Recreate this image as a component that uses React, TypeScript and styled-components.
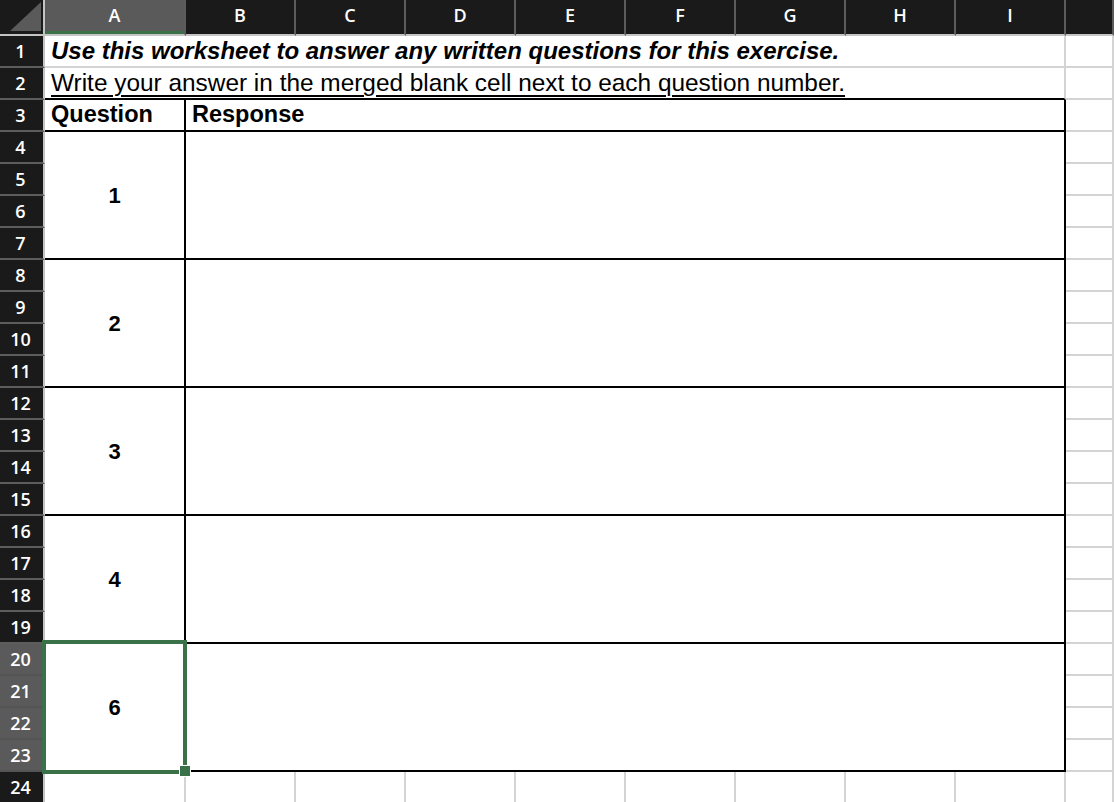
import React from "react";
import styled, { createGlobalStyle, css } from "styled-components";

const GlobalStyle = createGlobalStyle`
  html, body {
    margin: 0;
    padding: 0;
    background: #ffffff;
    overflow: hidden;
  }
`;

const Sheet = styled.div`
  display: grid;
  grid-template-columns: 45px 141px repeat(8, 110px) 1fr;
  grid-template-rows: 36px repeat(24, 32px);
  width: 1114px;
  height: 802px;
  overflow: hidden;
  font-family: "Liberation Sans", Arial, sans-serif;
  color: #000;
`;

const Corner = styled.div`
  position: relative;
  grid-column: 1;
  grid-row: 1;
  background: #1a1a1a;
  border-right: 2px solid #c4c4c4;
  border-bottom: 2px solid #c4c4c4;

  &::after {
    content: "";
    position: absolute;
    right: 2px;
    bottom: 3px;
    width: 31px;
    height: 29px;
    background: #5a5a5a;
    clip-path: polygon(100% 0, 100% 100%, 0 100%);
  }
`;

const headerText = css`
  font-family: "Open Sans", "DejaVu Sans", sans-serif;
  font-size: 18px;
  font-weight: 600;
  color: #ffffff;
  display: flex;
  align-items: center;
  justify-content: center;
  box-sizing: border-box;
`;

const ColHeader = styled.div<{ $col: number; $active?: boolean }>`
  ${headerText};
  grid-column: ${({ $col }) => $col};
  grid-row: 1;
  background: ${({ $active }) => ($active ? "#5a5a5a" : "#1a1a1a")};
  border-right: 2px solid #5c5c5c;
  border-bottom: 2px solid #c4c4c4;
  padding-bottom: 4px;
  ${({ $active }) =>
    $active &&
    css`
      box-shadow: inset 0 -3px 0 #3b7149;
    `}
`;

const RowHeader = styled.div<{ $row: number; $active?: boolean }>`
  ${headerText};
  grid-column: 1;
  grid-row: ${({ $row }) => $row + 1};
  background: ${({ $active }) => ($active ? "#5a5a5a" : "#1a1a1a")};
  border-bottom: 2px solid ${({ $active }) => ($active ? "#545454" : "#5c5c5c")};
  border-right: 2px solid #c4c4c4;
  padding-right: 2px;
`;

const Cell = styled.div<{
  $col: string;
  $row: string;
  $boxed?: boolean;
  $underTable?: boolean;
  $center?: boolean;
}>`
  grid-column: ${({ $col }) => $col};
  grid-row: ${({ $row }) => $row};
  box-sizing: border-box;
  background: #ffffff;
  border-right: 2px solid ${({ $boxed }) => ($boxed ? "#000" : "#d4d4d4")};
  border-bottom: 2px solid
    ${({ $boxed, $underTable }) => ($boxed || $underTable ? "#000" : "#d4d4d4")};
  display: flex;
  align-items: ${({ $center }) => ($center ? "center" : "flex-end")};
  justify-content: ${({ $center }) => ($center ? "center" : "flex-start")};
  padding: ${({ $center }) => ($center ? "0" : "0 0 2px 6px")};
  font-size: 24px;
  line-height: 27px;
  white-space: nowrap;
  overflow: visible;
`;

const Title = styled.span`
  font-weight: 700;
  font-style: italic;
`;

const Note = styled.span`
  font-size: 24.4px;
  text-decoration: underline;
  text-decoration-thickness: 2px;
  text-underline-offset: 4px;
`;

const Heading = styled.span`
  font-weight: 700;
  font-size: 23.5px;
`;

const Number = styled.span`
  font-weight: 700;
  font-size: 22px;
`;

/* active cell outline with its fill handle */
const Selection = styled.div<{ $row: number }>`
  position: relative;
  grid-column: 2;
  grid-row: ${({ $row }) => `${$row + 1} / span 4`};
  margin: -4px -1px -2px -3px;
  border: 4px solid #3b7149;
  z-index: 2;
  pointer-events: none;

  &::after {
    content: "";
    position: absolute;
    right: -7px;
    bottom: -6px;
    width: 10px;
    height: 10px;
    background: #3b7149;
    box-shadow: 0 0 0 1px #ffffff;
  }
`;

const COLS = ["A", "B", "C", "D", "E", "F", "G", "H", "I"];
const QUESTIONS = [
  { row: 4, label: "1" },
  { row: 8, label: "2" },
  { row: 12, label: "3" },
  { row: 16, label: "4" },
  { row: 20, label: "6" },
];
const ACTIVE_ROWS = [20, 21, 22, 23];

const gridRow = (r: number, span = 1) => `${r + 1} / span ${span}`;

const App: React.FC = () => {
  const spare: React.ReactNode[] = [];
  for (let r = 1; r <= 23; r++) {
    spare.push(<Cell key={`j${r}`} $col="11" $row={gridRow(r)} />);
  }

  return (
    <React.Fragment>
      <GlobalStyle />
      <Sheet>
        <Corner />
        {COLS.map((c, i) => (
          <ColHeader key={c} $col={i + 2} $active={c === "A"}>
            {c}
          </ColHeader>
        ))}
        <ColHeader $col={11} />

        {Array.from({ length: 24 }, (_, i) => i + 1).map((r) => (
          <RowHeader key={r} $row={r} $active={ACTIVE_ROWS.includes(r)}>
            {r}
          </RowHeader>
        ))}

        {/* Instructions */}
        <Cell $col="2 / 11" $row={gridRow(1)}>
          <Title>
            Use this worksheet to answer any written questions for this exercise.
          </Title>
        </Cell>
        <Cell $col="2 / 11" $row={gridRow(2)} $underTable>
          <Note>
            Write your answer in the merged blank cell next to each question number.
          </Note>
        </Cell>

        {/* Answer table */}
        <Cell $col="2" $row={gridRow(3)} $boxed>
          <Heading>Question</Heading>
        </Cell>
        <Cell $col="3 / 11" $row={gridRow(3)} $boxed>
          <Heading>Response</Heading>
        </Cell>
        {QUESTIONS.map((q) => (
          <React.Fragment key={q.row}>
            <Cell $col="2" $row={gridRow(q.row, 4)} $boxed $center>
              <Number>{q.label}</Number>
            </Cell>
            <Cell $col="3 / 11" $row={gridRow(q.row, 4)} $boxed />
          </React.Fragment>
        ))}

        {spare}

        {/* Row 24 */}
        {Array.from({ length: 10 }, (_, i) => (
          <Cell key={`r24-${i}`} $col={`${i + 2}`} $row={gridRow(24)} />
        ))}

        <Selection $row={20} />
      </Sheet>
    </React.Fragment>
  );
};

export default App;
